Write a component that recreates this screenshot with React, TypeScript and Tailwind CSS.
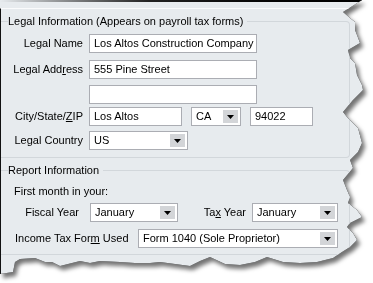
import type { ReactNode } from "react";

// torn-paper outline of the screenshot, in page pixels
const tornEdge: [number, number][] = [
  [0, 0], [362, 0], [343, 12], [350, 18], [355, 22], [355, 30], [357, 35],
  [360, 43], [348, 50], [350, 58], [355, 63], [357, 75], [362, 85],
  [363, 90], [353, 100], [343, 112], [347, 117], [358, 128], [362, 143],
  [358, 152], [350, 160], [353, 168], [343, 180], [347, 190], [350, 197],
  [348, 203], [357, 210], [362, 217], [350, 223], [347, 227], [353, 233],
  [357, 240], [350, 247], [342, 252], [333, 258], [317, 262], [300, 263],
  [283, 262], [267, 257], [255, 262], [240, 265], [225, 264], [210, 257],
  [200, 261], [190, 266], [175, 264], [160, 262], [150, 263], [135, 263],
  [120, 262], [100, 261], [90, 263], [80, 261], [72, 263], [60, 266],
  [52, 262], [45, 262], [35, 258], [20, 259], [15, 262], [13, 272], [0, 274],
];

function TextBox({ className, value }: { className: string; value?: string }) {
  return (
    <div
      className={`flex h-[19px] items-center border border-[#abadb3] bg-white pl-[4px] ${className}`}
    >
      <span className="truncate">{value}</span>
    </div>
  );
}

function Select({ className, value }: { className: string; value: string }) {
  return (
    <div
      className={`flex h-[19px] items-center border border-[#abadb3] bg-white ${className}`}
    >
      <span className="flex-1 truncate pl-[4px]">{value}</span>
      <span className="mr-[2px] flex h-[13px] w-[15px] items-center justify-center bg-[#d3d5d8]">
        <svg width="7" height="4" viewBox="0 0 7 4">
          <path d="M0 0h7L3.5 4z" fill="#000" />
        </svg>
      </span>
    </div>
  );
}

function Row({ label, children, className }: { label: ReactNode; children: ReactNode; className: string }) {
  return (
    <div className={`flex items-center ${className}`}>
      <div className="w-[88px] pr-[6px] text-right whitespace-nowrap">{label}</div>
      {children}
    </div>
  );
}

export default function App() {
  const clip = `polygon(${tornEdge.map(([x, y]) => `${x}px ${y}px`).join(", ")})`;

  return (
    <div className="h-[283px] w-[373px] overflow-hidden bg-white font-['Liberation_Sans',Arial,sans-serif] text-[11px] leading-[13px] text-black">
      <div className="[filter:drop-shadow(0_0_0.6px_#000)_drop-shadow(3px_4px_2px_rgba(0,0,0,0.55))]">
        <div className="flex h-[283px] flex-col bg-[#e7ebee]" style={{ clipPath: clip }}>
          <div className="h-[2px] bg-linear-to-r from-[#e7ebee] via-[#222] via-40% to-black" />
          <div className="h-[6px]" />
          <div className="flex flex-1 flex-col border-t border-l border-t-[#fafbfc] border-l-[#111]">
            <fieldset className="mt-[6px] w-[349px] rounded-r-[4px] border border-l-0 border-[#d2d7db] pb-[7px]">
              <legend className="ml-[7px] pr-[4px]">Legal Information (Appears on payroll tax forms)</legend>
              <Row className="mt-[6px]" label={<>Le<span className="underline">g</span>al Name</>}>
                <TextBox className="w-[168px]" value="Los Altos Construction Company" />
              </Row>
              <Row className="mt-[7px]" label={<>Legal Add<span className="underline">r</span>ess</>}>
                <TextBox className="w-[168px]" value="555 Pine Street" />
              </Row>
              <Row className="mt-[6px]" label="">
                <TextBox className="w-[168px]" />
              </Row>
              <Row className="mt-[3px]" label={<>City/State/<span className="underline">Z</span>IP</>}>
                <TextBox className="w-[93px]" value="Los Altos" />
                <Select className="ml-[9px] w-[50px]" value="CA" />
                <TextBox className="ml-[9px] w-[63px]" value="94022" />
              </Row>
              <Row className="mt-[5px]" label="Legal Country">
                <Select className="w-[99px]" value="US" />
              </Row>
            </fieldset>

            <fieldset className="mt-[6px] w-[349px] rounded-r-[4px] border border-l-0 border-[#d2d7db] pb-[6px]">
              <legend className="ml-[7px] pr-[4px]">Report Information</legend>
              <div className="mt-[8px] pl-[13px]">First month in your:</div>
              <div className="mt-[5px] flex items-center">
                <div className="w-[89px] pr-[11px] text-right">Fiscal Year</div>
                <Select className="w-[88px]" value="January" />
                <div className="w-[74px] pr-[6px] text-right whitespace-nowrap">
                  Ta<span className="underline">x</span> Year
                </div>
                <Select className="w-[86px]" value="January" />
              </div>
              <div className="mt-[7px] flex items-center">
                <div className="w-[137px] pl-[14px] whitespace-nowrap">
                  Income Tax For<span className="underline">m</span> Used
                </div>
                <Select className="w-[200px]" value="Form 1040 (Sole Proprietor)" />
              </div>
            </fieldset>
          </div>
        </div>
      </div>
    </div>
  );
}
